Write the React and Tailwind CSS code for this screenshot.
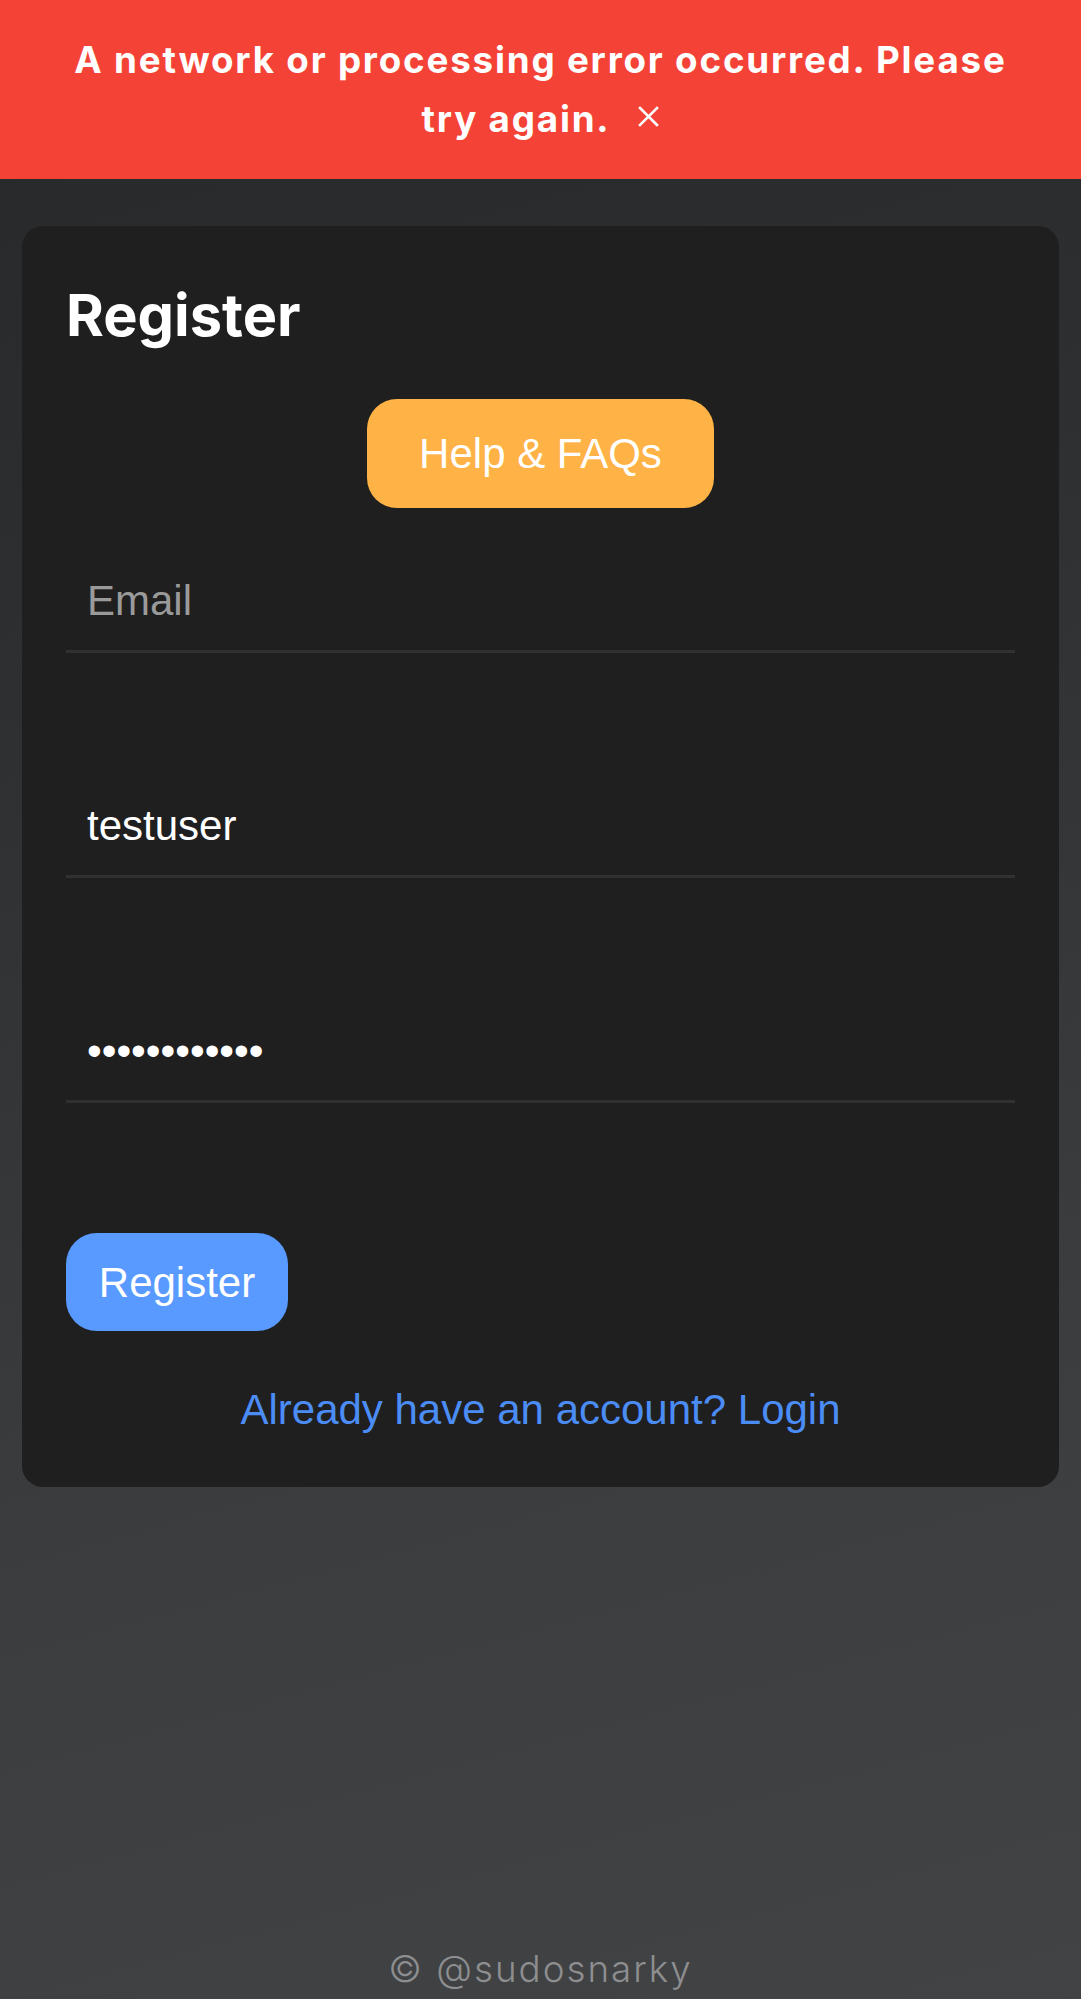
import { useState } from 'react'

const SANS = "font-['Liberation_Sans',Arial,sans-serif]"

function CloseIcon() {
  return (
    <svg width="21" height="21" viewBox="0 0 21 21" className="inline-block align-[5px]" aria-hidden="true">
      <path d="M2 2 L19 19 M19 2 L2 19" stroke="white" strokeWidth="2.6" strokeLinecap="square" fill="none" />
    </svg>
  )
}

function ErrorBanner({ onClose }) {
  return (
    <div className="bg-[#f44336] px-[48px] pt-[30px] pb-[31px] text-center text-[36.75px] font-bold leading-[59px] tracking-[1.8px] text-white">
      A network or processing error occurred. Please try again.
      <button type="button" onClick={onClose} className="ml-[28px] inline-block cursor-pointer" aria-label="Close">
        <CloseIcon />
      </button>
    </div>
  )
}

function Field({ type = 'text', placeholder, value, onChange }) {
  return (
    <input
      type={type}
      placeholder={placeholder}
      value={value}
      onChange={(e) => onChange(e.target.value)}
      className={`${SANS} block h-[97px] w-full border-b-[3px] border-[#303030] bg-transparent px-[21px] pt-[21px] pb-[25px] text-[42px] leading-[48px] text-white outline-none placeholder:text-[#9a9a9a]`}
    />
  )
}

export default function App() {
  const [showError, setShowError] = useState(true)
  const [email, setEmail] = useState('')
  const [username, setUsername] = useState('testuser')
  const [password, setPassword] = useState('password1234')

  return (
    <div className="flex min-h-screen flex-col bg-[linear-gradient(165deg,#27282a_0%,#2e2f31_30%,#3c3d3f_70%,#424345_100%)] font-['Inter',sans-serif]">
      {showError && <ErrorBanner onClose={() => setShowError(false)} />}

      <main className="px-[22px] pt-[47px]">
        <div className="rounded-[21px] bg-[#1f1f1f] px-[44px] pt-[54px] pb-[53px]">
          <h2 className="text-[57.75px] font-bold leading-[70px] text-white">Register</h2>

          <div className="mt-[49px] flex justify-center">
            <button
              type="button"
              className={`${SANS} h-[109px] rounded-[30px] bg-[#ffb347] px-[52px] text-[42px] text-white`}
            >
              Help &amp; FAQs
            </button>
          </div>

          <form className="mt-[48px]" onSubmit={(e) => e.preventDefault()}>
            <Field placeholder="Email" value={email} onChange={setEmail} />
            <div className="mt-[128px]">
              <Field placeholder="Username" value={username} onChange={setUsername} />
            </div>
            <div className="mt-[128px]">
              <Field type="password" placeholder="Password" value={password} onChange={setPassword} />
            </div>

            <button
              type="submit"
              className={`${SANS} mt-[130px] h-[98px] w-[222px] rounded-[31px] bg-[#589aff] text-[42px] text-white`}
            >
              Register
            </button>
          </form>

          <p className={`${SANS} mt-[55px] text-center text-[42px] leading-[48px] text-[#4b8cf5]`}>
            Already have an account? Login
          </p>
        </div>
      </main>

      <footer className="mt-auto pb-[3px] text-center text-[36.75px] font-light leading-[55px] tracking-[2px] text-[#8d8e90]">
        © @sudosnarky
      </footer>
    </div>
  )
}
